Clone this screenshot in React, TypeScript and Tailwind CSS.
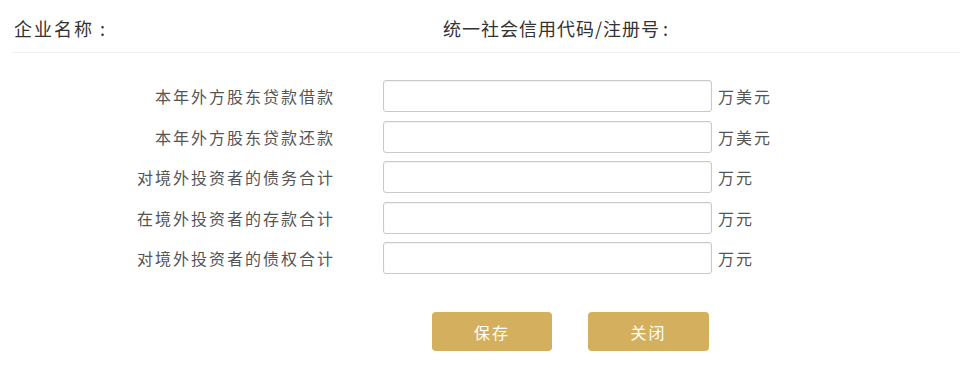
const FONT = { fontFamily: '"Microsoft YaHei", "Noto Sans CJK SC", "Noto Sans", sans-serif' };

const ROWS = [
  { label: "本年外方股东贷款借款", unit: "万美元" },
  { label: "本年外方股东贷款还款", unit: "万美元" },
  { label: "对境外投资者的债务合计", unit: "万元" },
  { label: "在境外投资者的存款合计", unit: "万元" },
  { label: "对境外投资者的债权合计", unit: "万元" },
];

function FieldRow({ label, unit }: { label: string; unit: string }) {
  return (
    <div className="flex items-center">
      <label className="w-[335px] text-right text-[16px] tracking-[2px] text-[#555]">{label}</label>
      <input
        type="text"
        className="ml-[48px] h-8 w-[329px] rounded-[3px] border border-[#c9c9c9] bg-white px-2 text-sm outline-none shadow-[inset_0_1px_2px_rgba(0,0,0,0.06)]"
      />
      <span className="ml-[6px] text-[16px] tracking-[2px] text-[#555]">{unit}</span>
    </div>
  );
}

export default function App() {
  return (
    <div className="h-[369px] w-[960px] overflow-hidden bg-white" style={FONT}>
      <div className="ml-3 flex h-[53px] items-center border-b border-[#f0f0f0] pt-[5px] text-[18px] text-[#333]">
        <span className="ml-[2px] w-[429px] tracking-[2px]">
          企业名称<span className="ml-[6px]">:</span>
        </span>
        <span className="tracking-[1px]">
          统一社会信用代码/注册号<span className="ml-[3px]">:</span>
        </span>
      </div>

      <div className="mt-[27px] flex flex-col gap-[8.5px]">
        {ROWS.map((r) => (
          <FieldRow key={r.label} label={r.label} unit={r.unit} />
        ))}
      </div>

      <div className="mt-[38px] flex gap-9 pl-[432px]">
        <button
          type="button"
          className="h-[39px] w-[120px] rounded-[4px] bg-[#d4b05e] text-[16px] tracking-[2px] text-white"
        >
          保存
        </button>
        <button
          type="button"
          className="h-[39px] w-[121px] rounded-[4px] bg-[#d4b05e] text-[16px] tracking-[2px] text-white"
        >
          关闭
        </button>
      </div>
    </div>
  );
}
